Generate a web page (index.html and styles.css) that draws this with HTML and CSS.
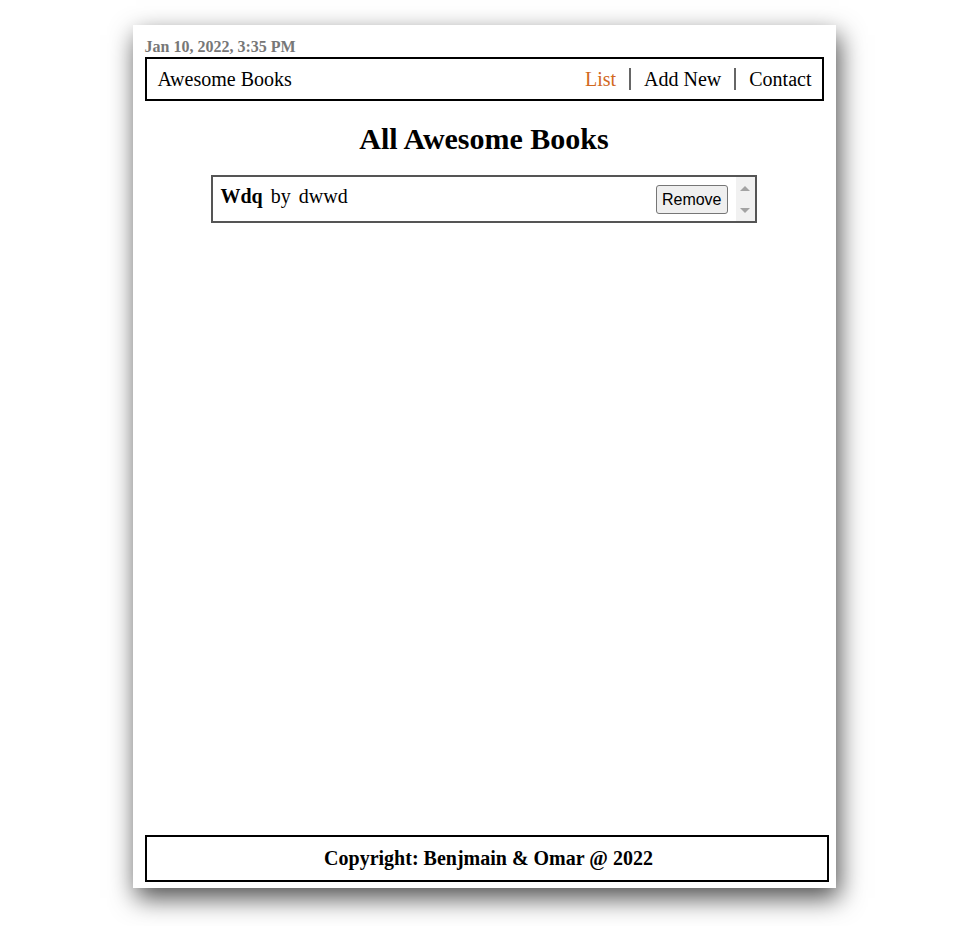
FILE: index.html
```html
<!DOCTYPE html>
<html lang="en">
<head>
<meta charset="utf-8">
<title>Awesome Books</title>
<link rel="stylesheet" href="styles.css">
</head>
<body>
<div class="page">
  <p class="date">Jan 10, 2022, 3:35 PM</p>
  <nav class="nav">
    <span class="brand">Awesome Books</span>
    <ul class="links">
      <li class="link active">List</li>
      <li class="sep"></li>
      <li class="link">Add New</li>
      <li class="sep"></li>
      <li class="link">Contact</li>
    </ul>
  </nav>
  <main class="main">
    <h1 class="title">All Awesome Books</h1>
    <div class="list">
      <div class="book">
        <p class="book-text"><b>Wdq</b><span class="by">by</span><span class="author">dwwd</span></p>
        <button class="remove" type="button">Remove</button>
      </div>
      <div class="scrollbar">
        <span class="arrow up"></span>
        <span class="arrow down"></span>
      </div>
    </div>
  </main>
  <footer class="footer">Copyright: Benjmain &amp; Omar @ 2022</footer>
</div>
</body>
</html>
```
FILE: styles.css
```css
html, body {
  margin: 0;
  padding: 0;
  background: #fff;
}
body {
  font-family: "Liberation Serif", "Times New Roman", serif;
  color: #000;
  padding-bottom: 38px;
}
.page {
  width: 703px;
  height: 863px;
  margin: 25px auto 0;
  box-sizing: border-box;
  padding: 12px 7px 6px 12px;
  background: #fff;
  box-shadow: 3px 10px 24px rgba(0, 0, 0, 0.7);
  display: flex;
  flex-direction: column;
}
.date {
  margin: 0;
  font-size: 16px;
  font-weight: bold;
  color: #777;
  line-height: 20px;
}
.nav {
  margin-right: 5px;
  height: 44px;
  box-sizing: border-box;
  border: 2px solid #000;
  display: flex;
  align-items: center;
  justify-content: space-between;
  padding: 0 10px 0 11px;
  font-size: 20px;
}
.links {
  list-style: none;
  margin: 0;
  padding: 0;
  display: flex;
  align-items: center;
}
.link {
  padding: 0 13px;
}
.link:last-child {
  padding-right: 0;
}
.link.active {
  color: #d2691e;
}
.sep {
  width: 2px;
  height: 22px;
  background: #666;
}
.main {
  flex: 1;
  display: flex;
  flex-direction: column;
  align-items: center;
  padding-right: 5px;
}
.title {
  margin: 21px 0 19px;
  font-size: 30px;
  line-height: 34px;
  font-weight: bold;
}
.list {
  width: 546px;
  height: 48px;
  box-sizing: border-box;
  border: 2px solid #555;
  display: flex;
  margin-right: 1px;
}
.book {
  flex: 1;
  display: flex;
  justify-content: space-between;
  align-items: flex-start;
  padding: 7px 8px 0 8px;
}
.book-text {
  margin: 0;
  font-size: 20px;
  line-height: 24px;
}
.by {
  margin-left: 8px;
}
.author {
  margin-left: 8px;
}
.remove {
  margin-top: 1px;
  font-family: "Liberation Sans", Arial, sans-serif;
  font-size: 16px;
  height: 29px;
  padding: 0 5px;
  background: #efefef;
  border: 1px solid #767676;
  border-radius: 3px;
  color: #000;
}
.scrollbar {
  width: 19px;
  background: #f1f1f1;
  display: flex;
  flex-direction: column;
  justify-content: space-between;
  align-items: center;
  padding: 9px 0 8px;
}
.arrow {
  width: 0;
  height: 0;
  border-left: 5px solid transparent;
  border-right: 5px solid transparent;
}
.arrow.up {
  border-bottom: 5px solid #a3a3a3;
}
.arrow.down {
  border-top: 5px solid #a3a3a3;
}
.footer {
  height: 47px;
  box-sizing: border-box;
  border: 2px solid #000;
  display: flex;
  align-items: center;
  justify-content: center;
  padding-left: 4px;
  font-size: 20px;
  font-weight: bold;
}
```
